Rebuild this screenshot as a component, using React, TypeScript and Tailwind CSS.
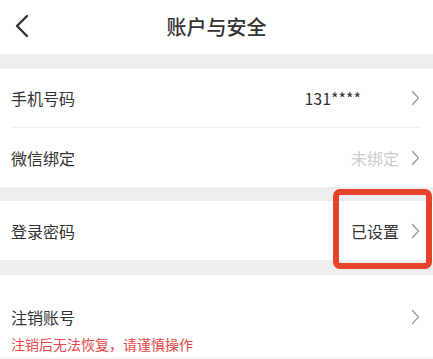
import React from "react";

const font = { fontFamily: '"Noto Sans CJK SC", "Noto Sans", sans-serif' };

function Chevron() {
  return (
    <svg width="9" height="16" viewBox="0 0 9 16" className="shrink-0">
      <polyline points="1.5,1.5 7.5,8 1.5,14.5" fill="none" stroke="#9a9a9a" strokeWidth="1.3" strokeLinecap="round" strokeLinejoin="round" />
    </svg>
  );
}

export default function App() {
  return (
    <div className="relative w-[433px] h-[359px] bg-[#ededed] overflow-hidden" style={font}>
      <div className="relative h-[54px] bg-white flex items-center justify-center">
        <svg width="16" height="24" viewBox="0 0 16 24" className="absolute left-[14px] top-[14px]">
          <polyline points="13,2 3,12 13,22" fill="none" stroke="#333" strokeWidth="2.4" strokeLinecap="round" strokeLinejoin="round" />
        </svg>
        <span className="text-[20px] font-medium text-[#333] leading-none">账户与安全</span>
      </div>
      <div className="h-[15px]" />
      <div className="bg-white">
        <div className="h-[58px] flex items-center pl-[11px] pr-[13px]">
          <span className="text-[16px] text-[#333] flex-1">手机号码</span>
          <span className="text-[16px] text-[#333] mr-[50px]">131****</span>
          <Chevron />
        </div>
        <div className="h-px bg-[#f0f0f0] ml-[11px] mr-[13px]" />
        <div className="h-[59px] flex items-center pl-[11px] pr-[13px]">
          <span className="text-[16px] text-[#333] flex-1">微信绑定</span>
          <span className="text-[16px] text-[#cccccc] mr-[12px]">未绑定</span>
          <Chevron />
        </div>
      </div>
      <div className="h-[14px]" />
      <div className="bg-white h-[59px] flex items-center pl-[11px] pr-[13px]">
        <span className="text-[16px] text-[#333] flex-1">登录密码</span>
        <span className="text-[16px] text-[#333] mr-[12px]">已设置</span>
        <Chevron />
      </div>
      <div className="h-[15px]" />
      <div className="bg-white h-[83px] pl-[11px] pr-[13px] pt-[30px]">
        <div className="flex items-center h-[24px]">
          <span className="text-[16px] text-[#333] flex-1 leading-none">注销账号</span>
          <Chevron />
        </div>
        <div className="text-[14px] text-[#e84848] leading-none mt-[8px]">注销后无法恢复，请谨慎操作</div>
      </div>
      <div className="absolute left-[333px] top-[189px] w-[99px] h-[80px] border-[6px] border-[#e8412c] rounded-[7px]" />
    </div>
  );
}
